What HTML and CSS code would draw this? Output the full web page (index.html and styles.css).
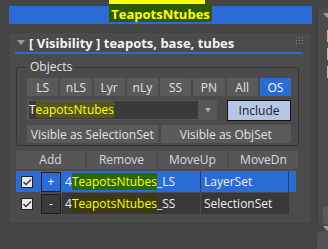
FILE: index.html
```html
<!DOCTYPE html>
<html>
<head>
    <meta charset="utf-8" />
    <title>Visibility</title>
    <link rel="stylesheet" href="styles.css">
</head>
<body>
<div class="app">
    <div class="main">
        <div class="titlebar"><span class="hl-title">TeapotsNtubes</span></div>

        <div class="rollout">
            <div class="rollout-head">
                <span class="caret"></span>
                <span class="rollout-title">[ Visibility ] teapots, base, tubes</span>
                <svg class="grip" width="7" height="7" viewBox="0 0 7 7">
                    <g fill="#8a8a8a">
                        <rect x="0" y="0" width="1" height="1"/><rect x="3" y="0" width="1" height="1"/><rect x="6" y="0" width="1" height="1"/>
                        <rect x="0" y="3" width="1" height="1"/><rect x="3" y="3" width="1" height="1"/><rect x="6" y="3" width="1" height="1"/>
                        <rect x="0" y="6" width="1" height="1"/><rect x="3" y="6" width="1" height="1"/><rect x="6" y="6" width="1" height="1"/>
                    </g>
                </svg>
            </div>

            <!--Objects-->
            <fieldset class="group">
                <legend>Objects</legend>
                <div class="modes">
                    <button class="btn">LS</button>
                    <button class="btn">nLS</button>
                    <button class="btn">Lyr</button>
                    <button class="btn">nLy</button>
                    <button class="btn">SS</button>
                    <button class="btn">PN</button>
                    <button class="btn">All</button>
                    <button class="btn active">OS</button>
                </div>
                <div class="pick">
                    <div class="combo">
                        <span class="combo-text">T<span class="hl hl-field">eapotsNtubes</span></span>
                        <span class="combo-arrow"></span>
                    </div>
                    <button class="include">Include</button>
                </div>
                <div class="vis">
                    <button class="btn">Visible as SelectionSet</button>
                    <button class="btn">Visible as ObjSet</button>
                </div>
            </fieldset>

            <!--List-->
            <div class="list-head">
                <span>Add</span>
                <span>Remove</span>
                <span>MoveUp</span>
                <span>MoveDn</span>
            </div>
            <div class="row sel">
                <span class="cell-check"><span class="check"></span></span>
                <span class="cell-btn"><span class="mini">+</span></span>
                <span class="cell-name">4<span class="hl hl-sel">TeapotsNtubes</span>_LS</span>
                <span class="cell-type">LayerSet</span>
                <span class="tail"></span>
            </div>
            <div class="row">
                <span class="cell-check"><span class="check"></span></span>
                <span class="cell-btn"><span class="mini">-</span></span>
                <span class="cell-name">4<span class="hl hl-row">TeapotsNtubes</span>_SS</span>
                <span class="cell-type">SelectionSet</span>
            </div>
        </div>
    </div>

    <!--Side panel-->
    <div class="side">
        <div class="side-top">
            <span class="side-caret"></span>
            <span class="side-box"></span>
            <span class="side-box"></span>
            <span class="side-box"></span>
            <span class="side-knob"></span>
        </div>
        <div class="side-bottom">
            <span class="side-caret"></span>
        </div>
    </div>
</div>
</body>
</html>
```

FILE: styles.css
```css
body {
    margin: 0;
    background: #444444;
    font-family: "Open Sans", "Liberation Sans", sans-serif;
    font-size: 12px;
    color: #dcdcdc;
}

.app {
    display: flex;
    height: 249px;
    overflow: hidden;
}

.main {
    width: 316px;
    padding-left: 9px;
    box-sizing: border-box;
    flex: none;
}

/* title bar */
.titlebar {
    margin-top: 6px;
    width: 303px;
    height: 18px;
    background: #2b6bd5;
    display: flex;
    justify-content: center;
}

.hl-title {
    position: relative;
    margin-top: -2px;
    height: 18px;
    padding: 0 2px;
    background: #2d5a00;
    color: #ffff00;
    font-weight: bold;
    font-size: 13px;
    line-height: 20px;
}

    .hl-title::before {
        content: "";
        position: absolute;
        left: 0;
        right: 7px;
        top: -4px;
        height: 4px;
        background: #ffff00;
    }

/* rollout */
.rollout {
    margin-top: 9px;
    width: 302px;
    height: 190px;
    background: #4b4b4b;
    border-radius: 4px;
    padding: 0 13px 0 7px;
    box-sizing: border-box;
}

.rollout-head {
    display: flex;
    align-items: center;
    height: 19px;
    margin: 0 -5px 0 -1px;
    border-bottom: 2px solid #2b6bd5;
    color: #f4f4f4;
}

.caret {
    width: 0;
    height: 0;
    margin-left: 2px;
    border-left: 4px solid transparent;
    border-right: 4px solid transparent;
    border-top: 5px solid #9a9a9a;
}

.rollout-title {
    margin-left: 4px;
    font-weight: bold;
    font-size: 13px;
    flex: 1;
}

.grip {
    margin-top: -4px;
}

/* group */
.group {
    margin: 6px 0 0 0;
    padding: 4px 7px 2px 10px;
    border: 1px solid #343434;
    border-radius: 3px;
}

    .group legend {
        padding: 0 2px;
        margin-left: 1px;
        color: #e4e4e4;
        line-height: 14px;
    }

.btn {
    height: 18px;
    padding: 0;
    border: none;
    background: #5a5a5a;
    color: #e2e2e2;
    font-family: inherit;
    font-size: 12px;
}

    .btn.active {
        background: #2b6bd5;
        color: #ffffff;
    }

.modes {
    display: grid;
    grid-template-columns: repeat(8, 1fr);
    gap: 2px;
}

.pick {
    display: flex;
    align-items: flex-start;
    margin-top: 4px;
}

.combo {
    display: flex;
    width: 190px;
    height: 20px;
    padding: 1px 0 1px 2px;
    box-sizing: border-box;
    background: #575757;
}

.combo-text {
    flex: 1;
    background: #3a3a3a;
    color: #ffffff;
    line-height: 18px;
}

.combo-arrow {
    width: 19px;
    display: flex;
    align-items: center;
    justify-content: center;
}

    .combo-arrow::after {
        content: "";
        border-left: 3px solid transparent;
        border-right: 3px solid transparent;
        border-top: 4px solid #b0b0b0;
    }

.include {
    margin-left: 10px;
    width: 64px;
    height: 21px;
    padding: 0;
    border: 1px solid #111111;
    background: #b4c7e6;
    color: #222222;
    font-family: inherit;
    font-size: 12px;
}

.vis {
    display: flex;
    gap: 3px;
    margin-top: 4px;
}

    .vis .btn {
        flex: 1;
    }

/* highlight marks */
.hl {
    color: #ffff00;
}

.hl-field {
    background: #56561a;
}

.hl-sel {
    background: #2c6800;
}

.hl-row {
    background: #3c3c00;
}

/* list */
.list-head {
    display: flex;
    gap: 2px;
    margin-top: 5px;
}

    .list-head span {
        flex: 1;
        height: 18px;
        line-height: 18px;
        text-align: center;
        background: #565656;
        color: #d8d8e0;
    }

.row {
    display: flex;
    height: 21px;
    margin-top: 1px;
    line-height: 21px;
    color: #eeeeee;
}

    .row.sel {
        margin-top: 2px;
        background: #2b6bd5;
        width: 280px;
    }

.cell-check {
    width: 24px;
    display: flex;
    align-items: center;
}

.check {
    width: 12px;
    height: 12px;
    margin-left: 5px;
    box-sizing: border-box;
    border: 1px solid #222222;
    background: #e8e8e8 url("data:image/svg+xml,%3Csvg xmlns='http://www.w3.org/2000/svg' width='10' height='10'%3E%3Cpolyline points='1.5,5 4,7.5 9,2.5' fill='none' stroke='%23333' stroke-width='1.3'/%3E%3C/svg%3E") center no-repeat;
}

.cell-btn {
    width: 22px;
    display: flex;
    align-items: center;
}

.mini {
    width: 20px;
    height: 20px;
    margin-left: 1px;
    box-sizing: border-box;
    border: 1px solid #1e1e1e;
    text-align: center;
    line-height: 17px;
    color: #ffffff;
    background: #3a3a3a;
}

.sel .mini {
    background: #2b6bd5;
}

.cell-name {
    width: 138px;
    padding-left: 3px;
    box-sizing: border-box;
    background: #383838;
}

.cell-type {
    width: 88px;
    margin-left: 1px;
    padding-left: 3px;
    box-sizing: border-box;
    background: #383838;
}

.sel .cell-name,
.sel .cell-type {
    background: transparent;
}

.sel .cell-type {
    border-left: 1px solid #2a3f66;
    margin-left: 0;
}

.tail {
    width: 7px;
    border-left: 1px solid #2a3f66;
}

/* side panel */
.side {
    flex: 1;
    display: flex;
    flex-direction: column;
    padding-left: 1px;
}

.side-top {
    margin-top: 8px;
    height: 218px;
    background: #4b4b4b;
    border-radius: 4px 0 0 4px;
    border-left: 1px solid #3a3a3a;
    display: flex;
    flex-direction: column;
    padding-left: 5px;
}

.side-caret {
    width: 0;
    height: 0;
    margin-top: 5px;
    border-left: 4px solid transparent;
    border-right: 4px solid transparent;
    border-top: 5px solid #9a9a9a;
}

.side-box {
    width: 10px;
    height: 10px;
    margin: 6px 0 0 4px;
    border: 1px solid #b8b8b8;
}

    .side-box:nth-of-type(2) {
        margin-top: 12px;
        border-color: #c8b080;
    }

.side-knob {
    margin-top: 128px;
    width: 8px;
    height: 18px;
    border-radius: 3px 0 0 3px;
    background: #5a5a5a;
}

.side-bottom {
    margin-top: 5px;
    flex: 1;
    background: #525252;
    border-radius: 4px 0 0 0;
    padding-left: 6px;
}
```
